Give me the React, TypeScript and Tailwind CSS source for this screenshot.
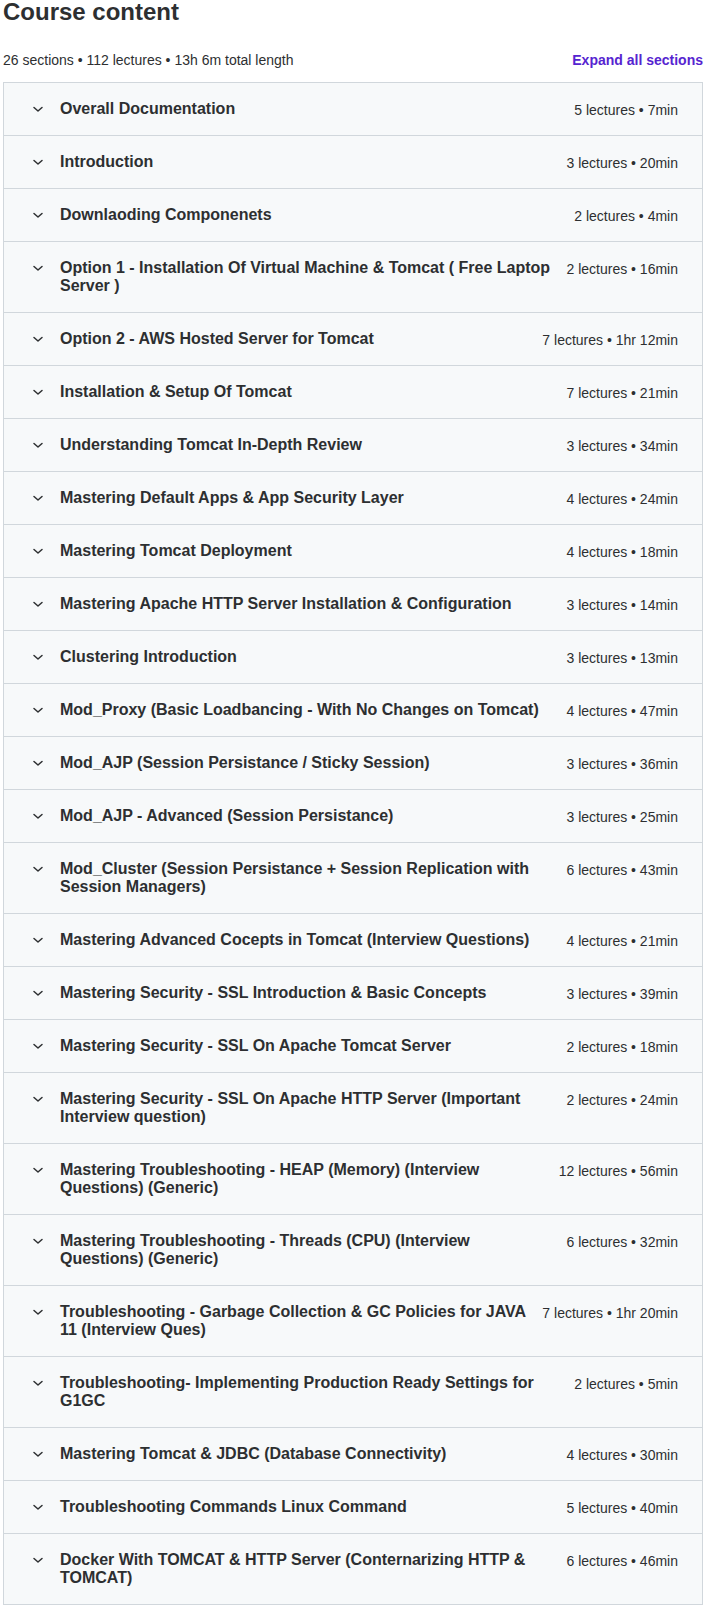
const sections: { title: string; meta: string }[] = [
  { title: "Overall Documentation", meta: "5 lectures • 7min" },
  { title: "Introduction", meta: "3 lectures • 20min" },
  { title: "Downlaoding Componenets", meta: "2 lectures • 4min" },
  { title: "Option 1 - Installation Of Virtual Machine & Tomcat ( Free Laptop Server )", meta: "2 lectures • 16min" },
  { title: "Option 2 - AWS Hosted Server for Tomcat", meta: "7 lectures • 1hr 12min" },
  { title: "Installation & Setup Of Tomcat", meta: "7 lectures • 21min" },
  { title: "Understanding Tomcat In-Depth Review", meta: "3 lectures • 34min" },
  { title: "Mastering Default Apps & App Security Layer", meta: "4 lectures • 24min" },
  { title: "Mastering Tomcat Deployment", meta: "4 lectures • 18min" },
  { title: "Mastering Apache HTTP Server Installation & Configuration", meta: "3 lectures • 14min" },
  { title: "Clustering Introduction", meta: "3 lectures • 13min" },
  { title: "Mod_Proxy (Basic Loadbancing - With No Changes on Tomcat)", meta: "4 lectures • 47min" },
  { title: "Mod_AJP (Session Persistance / Sticky Session)", meta: "3 lectures • 36min" },
  { title: "Mod_AJP - Advanced (Session Persistance)", meta: "3 lectures • 25min" },
  { title: "Mod_Cluster (Session Persistance + Session Replication with Session Managers)", meta: "6 lectures • 43min" },
  { title: "Mastering Advanced Cocepts in Tomcat (Interview Questions)", meta: "4 lectures • 21min" },
  { title: "Mastering Security - SSL Introduction & Basic Concepts", meta: "3 lectures • 39min" },
  { title: "Mastering Security - SSL On Apache Tomcat Server", meta: "2 lectures • 18min" },
  { title: "Mastering Security - SSL On Apache HTTP Server (Important Interview question)", meta: "2 lectures • 24min" },
  { title: "Mastering Troubleshooting - HEAP (Memory) (Interview Questions) (Generic)", meta: "12 lectures • 56min" },
  { title: "Mastering Troubleshooting - Threads (CPU) (Interview Questions) (Generic)", meta: "6 lectures • 32min" },
  { title: "Troubleshooting - Garbage Collection & GC Policies for JAVA 11 (Interview Ques)", meta: "7 lectures • 1hr 20min" },
  { title: "Troubleshooting- Implementing Production Ready Settings for G1GC", meta: "2 lectures • 5min" },
  { title: "Mastering Tomcat & JDBC (Database Connectivity)", meta: "4 lectures • 30min" },
  { title: "Troubleshooting Commands Linux Command", meta: "5 lectures • 40min" },
  { title: "Docker With TOMCAT & HTTP Server (Conternarizing HTTP & TOMCAT)", meta: "6 lectures • 46min" },
];

function Chevron() {
  return (
    <svg width="12" height="18" viewBox="0 0 12 18" className="shrink-0">
      <polyline points="2,7.5 6,11 10,7.5" fill="none" stroke="#2d2f31" strokeWidth="1.5" strokeLinecap="round" strokeLinejoin="round" />
    </svg>
  );
}

export default function App() {
  return (
    <div className="ml-[3px] w-[700px] text-[#2d2f31] font-['Liberation_Sans',Arial,sans-serif]">
      <h2 className="text-[24px] leading-[24px] font-bold">Course content</h2>
      <div className="mt-[26px] mb-[12px] flex items-center justify-between text-[14px] leading-[20px]">
        <span>26 sections • 112 lectures • 13h 6m total length</span>
        <button className="font-bold text-[#5624d0]">Expand all sections</button>
      </div>
      <div className="border border-[#d1d7dc]">
        {sections.map((s, i) => (
          <div
            key={i}
            className={`flex items-start gap-4 bg-[#f7f9fa] pl-[28px] pr-[24px] py-[17px] ${i > 0 ? "border-t border-[#d1d7dc]" : ""}`}
          >
            <div className="flex min-w-0 flex-1 items-start gap-[16px]">
              <Chevron />
              <span className="text-[16px] leading-[18px] font-bold">{s.title}</span>
            </div>
            <span className="shrink-0 pt-px -mb-px text-[14px] leading-[18px]">{s.meta}</span>
          </div>
        ))}
      </div>
    </div>
  );
}
